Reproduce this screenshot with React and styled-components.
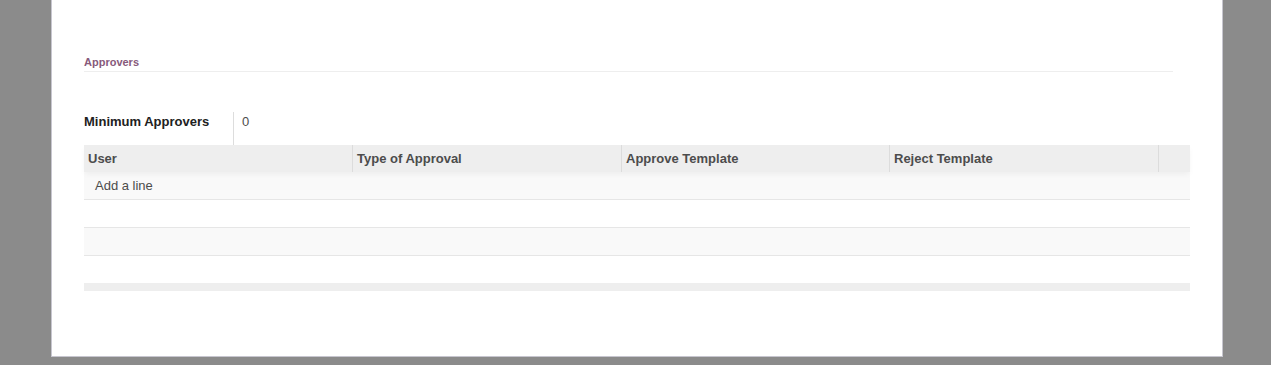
import React from "react";
import styled, { createGlobalStyle } from "styled-components";

const Global = createGlobalStyle`
  html, body { margin: 0; padding: 0; background: #8b8b8b; }
  body { font-family: "Liberation Sans", Arial, sans-serif; font-size: 13px; color: #4c4c4c; }
`;

const Backdrop = styled.div`
  height: 365px;
  overflow: hidden;
  background: #8b8b8b;
`;

const Sheet = styled.div`
  box-sizing: border-box;
  margin-left: 51px;
  width: 1172px;
  height: 357px;
  background: #fff;
  border: 1px solid #c7c6cf;
  border-top: none;
  padding: 54px 32px 0 32px;
`;

const Separator = styled.div`
  font-size: 11px;
  font-weight: bold;
  line-height: 17px;
  color: #875a7b;
  border-bottom: 1px solid #eeeeee;
  margin-right: 17px;
`;

const FieldRow = styled.div`
  display: flex;
  margin-top: 40px;
  height: 33px;
`;

const FieldLabel = styled.div`
  box-sizing: border-box;
  width: 150px;
  border-right: 1px solid #dddddd;
  padding-top: 1px;
  line-height: 18px;
  font-weight: bold;
  color: #212121;
`;

const FieldValue = styled.div`
  padding: 1px 0 0 8px;
  line-height: 18px;
  color: #4c4c4c;
`;

const Table = styled.div`
  width: 1106px;
`;

const Head = styled.div`
  display: grid;
  grid-template-columns: 268px 269px 268px 269px 1fr;
  height: 27px;
  background: #eeeeee;
  position: relative;
  z-index: 1;
  box-shadow: 0 3px 6px -1px rgba(0, 0, 0, 0.05);
`;

const HeadCell = styled.div`
  box-sizing: border-box;
  padding-left: 4px;
  line-height: 27px;
  font-weight: bold;
  color: #4c4c4c;
  border-left: ${(p) => (p.$first ? "none" : "1px solid #dcdcdc")};
  white-space: nowrap;
`;

const Row = styled.div`
  box-sizing: border-box;
  height: ${(p) => (p.$last ? "27px" : "28px")};
  background: ${(p) => (p.$striped ? "#f9f9f9" : "#ffffff")};
  border-bottom: ${(p) => (p.$last ? "none" : "1px solid #e6e6e6")};
  line-height: 27px;
  padding-left: 11px;
  color: #4c4c4c;
`;

const Footer = styled.div`
  height: 8px;
  background: #eeeeee;
`;

const columns = ["User", "Type of Approval", "Approve Template", "Reject Template", ""];
const rows = ["Add a line", "", "", ""];

export default function App() {
  return (
    <>
      <Global />
      <Backdrop>
        <Sheet>
          <Separator>Approvers</Separator>
          <FieldRow>
            <FieldLabel>Minimum Approvers</FieldLabel>
            <FieldValue>0</FieldValue>
          </FieldRow>
          <Table>
            <Head>
              {columns.map((c, i) => (
                <HeadCell key={i} $first={i === 0}>{c}</HeadCell>
              ))}
            </Head>
            {rows.map((r, i) => (
              <Row key={i} $striped={i % 2 === 0} $last={i === rows.length - 1}>
                {r}
              </Row>
            ))}
            <Footer />
          </Table>
        </Sheet>
      </Backdrop>
    </>
  );
}
